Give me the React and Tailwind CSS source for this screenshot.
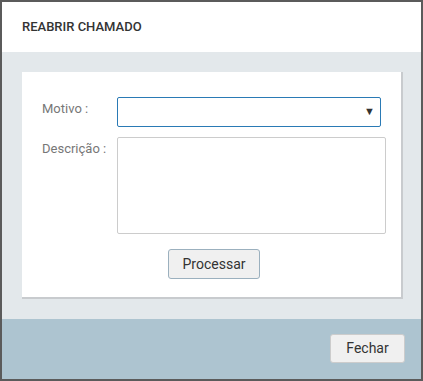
export default function App() {
  return (
    <div className="h-[381px] w-[423px] bg-[#5b5b5b] p-[2px] font-['Roboto',sans-serif]">
      <div className="flex h-full flex-col">
        <div className="flex h-[50px] items-center bg-white px-5">
          <h4 className="text-[13px] font-medium text-[#333]">REABRIR CHAMADO</h4>
        </div>
        <div className="flex flex-1 flex-col bg-[#e3e8eb] px-5 pt-5">
          <div className="h-[227px] w-[381px] border-r-2 border-b-2 border-[#c8cbce] bg-white pt-[25px]">
            <div className="flex items-start">
              <label className="w-[95px] pl-5 pt-[2px] text-[13px] text-[#777]">Motivo :</label>
              <div className="relative">
                <select className="h-[30px] w-[264px] appearance-none rounded-[2px] border border-[#2a7ab5] bg-white outline-none"></select>
                <span className="pointer-events-none absolute right-[6px] top-[7px] text-[11px] text-[#333]">▼</span>
              </div>
            </div>
            <div className="mt-[10px] flex items-start">
              <label className="w-[95px] pl-5 pt-[2px] text-[13px] text-[#777]">Descrição :</label>
              <textarea className="h-[97px] w-[269px] resize-none rounded-[2px] border border-[#ccc] outline-none"></textarea>
            </div>
            <div className="mt-[15px] flex pl-[146px]">
              <button className="h-[30px] w-[92px] rounded-[3px] border border-[#9bb0be] bg-[#f0f0f0] text-[14px] text-[#333]">
                Processar
              </button>
            </div>
          </div>
        </div>
        <div className="flex h-[60px] items-start justify-end bg-[#adc4d0] pr-[16px] pt-[15px]">
          <button className="h-[29px] w-[75px] rounded-[3px] border border-[#ccc] bg-[#f0f0f0] text-[14px] text-[#333]">
            Fechar
          </button>
        </div>
      </div>
    </div>
  )
}
